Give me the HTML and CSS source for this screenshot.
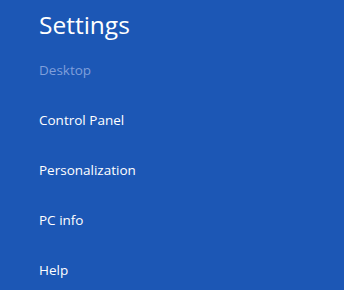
FILE: index.html
```html
<!DOCTYPE html>
<html lang="en">
<head>
  <meta charset="UTF-8" />
  <title>Settings</title>
  <link rel="stylesheet" href="styles.css">
</head>
<body>
  <div class="charm">
    <h1>Settings</h1>
    <ul class="menu">
      <li class="section">Desktop</li>
      <li>Control Panel</li>
      <li>Personalization</li>
      <li>PC info</li>
      <li>Help</li>
    </ul>
  </div>
</body>
</html>
```

FILE: styles.css
```css
html, body {
  margin: 0;
  height: 100%;
  background-color: #1c57b5;
}
body {
  font-family: "Open Sans", "Noto Sans", sans-serif;
  color: #fff;
  overflow: hidden;
}

.charm { padding: 6px 0 0 39px; }

h1 {
  margin: 0;
  font-size: 24.5px;
  font-weight: 400;
  line-height: 38px;
}

.menu {
  list-style: none;
  margin: 16px 0 0;
  padding: 0;
}
.menu li {
  font-size: 13.5px;
  line-height: 20px;
  height: 50px;
}
.menu li:last-child { height: auto; }
.menu .section { color: #7f9fdb; }
```
